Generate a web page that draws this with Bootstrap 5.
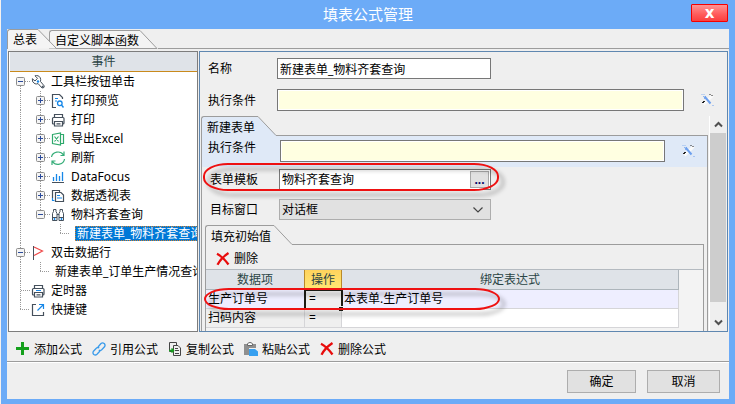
<!DOCTYPE html>
<html lang="zh-CN">
<head>
<meta charset="utf-8">
<meta name="viewport" content="width=device-width, initial-scale=1">
<title>填表公式管理</title>
<link href="https://cdn.jsdelivr.net/npm/bootstrap@5.3.0/dist/css/bootstrap.min.css" rel="stylesheet">
<style>
  body { font: 12px/19px "Noto Sans", "Noto Sans CJK SC", sans-serif; color: #000; background: #fff; }
  button, input, select { font: inherit; color: inherit; }
  svg { display: block; flex: none; }
  .dialog-frame { background: #6cabf7; border-left: 1px solid #f6f1ee; padding: 0 6px 5px; }
  .title-bar { height: 29px; flex: none; color: #fff; font-size: 15px; }
  .close-btn { top: 4px; right: 1px; width: 37px; height: 18px; border: 1px solid #f40000; border-radius: 1px;
    background: linear-gradient(#ff9292, #ff5a5a 60%, #fb3f3f); color: #fff; font: bold 15px/15px "DejaVu Sans", sans-serif; }
  .face { background: #efefef; }
  .edge-tab { background: none; border: 0; padding: 0; text-align: left; white-space: nowrap; }
  .edge-tab span { border-top: 1px solid #9c9c9c; border-left: 1px solid #9c9c9c; border-top-left-radius: 3px; background: #f4f4f4; }
  .tab-strip { height: 20px; }
  .tab-rule { flex: 1; border-bottom: 1px solid #9c9c9c; }
  .main-tab span { height: 20px; line-height: 20px; padding-left: 5px; }
  .second-tab { margin-left: -8px; }
  .second-tab span { height: 19px; border-bottom: 1px solid #9c9c9c; }
  .panes { grid-template-columns: 190px minmax(0, 1fr); gap: 1px; padding: 2px 1px 0; min-height: 0; }
  .tree-pane { border: 1px solid #7d7d7d; background: #fff; }
  .head-cell { background: #dfe3e8; color: #2b4545; }
  .tree-head { border-bottom: 1px solid #c98a1c; margin: 0 0 0 1px; line-height: 19px; }
  .tree-row { display: flex; align-items: center; height: 19px; padding-left: 1px; white-space: nowrap; }
  .tree-text { margin-left: 5px; }
  .leaf-text { padding: 0 2px; margin-left: 3px; line-height: 15px; }
  .leaf-text.picked { background: #0078d7; color: #fff; outline: 1px dotted #d08030; outline-offset: -1px; flex: 1; margin-left: 5px; }
  .twist { border: 0; background: none; padding: 0; }
  .form-pane { border: 1px solid #5f87b0; min-width: 0; }
  .top-fields { padding: 6px 11px 5px 8px; gap: 10px; }
  .field-row { display: flex; align-items: center; }
  .field-label { flex: none; width: 69px; }
  .box { border: 1px solid #777; background: #fff; padding: 0 2px; border-radius: 0; outline: 0; min-width: 0; }
  .box.formula { background: #ffffe1; height: 22px; box-shadow: inset 0 0 0 1px #fff; flex: 1; }
  .short-box { height: 21px; width: 214px; }
  .pick-box { width: 212px; height: 21px; border: 1px solid #777; background: #fff; padding: 1px; }
  .pick-box input { border: 0; padding: 0 1px; flex: 1; min-width: 0; outline: 0; }
  .pick-box button { width: 19px; border: 1px solid #a8a8a8; background: #e1e1e1; padding: 0; line-height: 12px; color: #006; font-weight: bold; }
  .pick-list { width: 212px; height: 21px; border: 1px solid #adadad; background: #e1e1e1; padding: 0 2px; appearance: none; }
  .pick-list-arrow { top: 7px; left: 270px; pointer-events: none; }
  .tool-gap { margin-left: 16px; }
  .scroll-zone { min-height: 0; }
  .page-area { padding-left: 1px; }
  .inner-page { border-right: 1px solid #9c9c9c; border-left: 1px solid #9c9c9c; }
  .blue-tab span { background: #dfe9f7; height: 20px; line-height: 21px; padding: 0 0 0 5px; width: 56px; }
  .blue-band { background: #dfe9f7; padding: 3px 10px 5px 6px; height: 31px; }
  .blue-band .field-label { width: 72px; line-height: 17px; align-self: flex-start; }
  .ringed { padding: 2px 0 9px 8px; }
  .target-row { padding-left: 8px; }
  .sub-tabs { padding: 5px 3px 0 3px; }
  .sub-tab span { height: 20px; line-height: 21px; width: 68px; padding-left: 5px; background: #efefef; }
  .sub-page { border: solid #9c9c9c; border-width: 0 1px; margin: 0 3px; background: #f3f3f3; }
  .sub-tools { height: 25px; padding: 3px 10px 0; background: #efefef; border-bottom: 1px solid #b4bac0; }
  .flat-btn { border: 0; background: none; padding: 0; display: flex; align-items: center; gap: 4px; white-space: nowrap; }
  .grid-table { table-layout: fixed; border-collapse: separate; border-spacing: 0; width: calc(100% - 24px); line-height: 18px; }
  .grid-table th, .grid-table td { padding: 0 2px; height: 19px; border: solid #d5d5d8; border-width: 0 1px 1px 0; font-weight: normal; white-space: nowrap; }
  .grid-table th { text-align: center; border-color: #adb5bb; height: 20px; }
  .grid-table th.hot { background: linear-gradient(#ffd35c, #ffe875); border-color: #b98a2a; box-shadow: -1px 0 #b98a2a; }
  .grid-table .current td { background: #eeeeff; }
  .grid-table td.fixed { background: #efefef; }
  .grid-table td.op { padding-left: 4px; }
  .grid-table td.cell-cursor { outline: 2px solid #1c1c14; outline-offset: -1px; position: relative; background: #efefef; }
  .cell-cursor::after { content: ""; position: absolute; right: -2px; bottom: -3px; width: 5px; height: 5px; background: #1c1c14; border: solid #efefef; border-width: 1px 0 0 1px; }
  .red-ring { position: absolute; width: 296px; border: 2px solid #ee1111; border-radius: 25px / 13px; filter: drop-shadow(5px 5px 2px rgba(0,0,0,.35)); pointer-events: none; }
  .ring-a { left: 1px; top: -4px; height: 28px; }
  .ring-b { left: -2px; top: 18px; height: 22px; border-radius: 25px / 11px; }
  .scroll-rail { width: 18px; flex: none; border-left: 1px solid #fff; margin-left: 1px; padding-right: 1px; }
  .scroll-rail button { height: 17px; border: 0; background: none; padding: 0; display: grid; place-items: center; }
  .scroll-thumb { background: #cdcdcd; height: 169px; }
  .actions { gap: 10px; padding: 4px 9px 0; border-bottom: 1px solid #fff; box-shadow: inset 0 -1px #9c9c9c; height: 31px; }
  .footer-row { height: 36px; gap: 11px; padding: 7px 9px 6px; }
  .sys-btn { border: 1px solid #adadad; background: #e1e1e1; padding: 0; width: 69px; }
  .sys-btn.wide { width: 73px; }
</style>
</head>
<body>
<svg width="0" height="0" class="position-absolute" aria-hidden="true">
  <defs>
    <symbol id="g-v" viewBox="0 0 20 19"><path d="M10.500 0V19" stroke="#999" stroke-dasharray="1 1"/></symbol>
    <symbol id="g-t" viewBox="0 0 20 19"><path d="M10.500 0V19M11 9.500H20" stroke="#999" stroke-dasharray="1 1"/></symbol>
    <symbol id="g-l" viewBox="0 0 20 19"><path d="M10.500 0V9M10 9.500H22" stroke="#999" stroke-dasharray="1 1"/></symbol>
    <symbol id="g-box" viewBox="0 0 20 19"><path d="M15 9.500H20" stroke="#999" stroke-dasharray="1 1"/><rect x="6.500" y="5.500" width="8" height="8" rx="1" fill="#f4f4f4" stroke="#8c8c8c"/><path d="M8 9.500H13" stroke="#2b4b9b"/></symbol>
    <symbol id="g-minus" viewBox="0 0 20 19"><path d="M10.500 0V19" stroke="#999" stroke-dasharray="1 1"/><use href="#g-box" width="20" height="19"/></symbol>
    <symbol id="g-first" viewBox="0 0 20 19"><path d="M10.500 14V19" stroke="#999" stroke-dasharray="1 1"/><use href="#g-box" width="20" height="19"/></symbol>
    <symbol id="g-last" viewBox="0 0 20 19"><path d="M10.500 0V5" stroke="#999" stroke-dasharray="1 1"/><use href="#g-box" width="20" height="19"/></symbol>
    <symbol id="g-plus" viewBox="0 0 20 19"><path d="M10.500 0V19" stroke="#999" stroke-dasharray="1 1"/><use href="#g-box" width="20" height="19"/><path d="M10.500 7V12" stroke="#2b4b9b"/></symbol>
    <symbol id="i-print" viewBox="0 0 16 16"><path d="M4.500 5V2.500H12.500V5M4 12H3.500Q2.500 12 2.500 11V6.500Q2.500 5.500 3.500 5.500H13Q14 5.500 14 6.500V11Q14 12 13 12H12.500M4.500 9.500H12.500V14H4.500ZM6.500 11.800H10.500" fill="none" stroke="#45505c" stroke-width="1.200"/></symbol>
    <symbol id="i-cross" viewBox="0 0 14 14"><path d="M1 1.800Q7 5 12.500 12.500M12.500 1Q5 6 1.500 12.700" fill="none" stroke="#e80c0c" stroke-width="2.300"/></symbol>
    <symbol id="i-tools" viewBox="0 0 16 16"><path d="M3.500 12.500L12.500 3.500" stroke="#fafafa" stroke-width="3"/><path d="M1.500 2.500H5M3 4.500H6M4 6.500H7" stroke="#8cb4ee" stroke-dasharray="1 1"/><path d="M4.500 4.500L10.500 11.500" stroke="#6c9fee" stroke-width="2"/><path d="M12.500 13.500H13.500" stroke="#6c9fee"/><path d="M2 10.500H4M3 9.500H5M9.500 2.500H10.500M11.500 3.500H12.500" stroke="#222"/></symbol>
  </defs>
</svg>

<main class="dialog-frame vh-100 d-flex flex-column overflow-hidden">
  <header class="title-bar position-relative d-flex align-items-center justify-content-center">
    <span>填表公式管理</span>
    <button type="button" class="close-btn position-absolute p-0" aria-label="关闭">x</button>
  </header>

  <div class="face flex-grow-1 d-flex flex-column overflow-hidden">
    <nav class="tab-strip d-flex flex-shrink-0 align-items-end">
      <button type="button" class="edge-tab main-tab d-flex position-relative z-1"><span>总表</span>
        <svg width="20" height="20"><path d="M0 0L19 19.500H0Z" fill="#f4f4f4"/><path d="M0 .5H1L19 19" fill="none" stroke="#9c9c9c"/></svg></button>
      <button type="button" class="edge-tab main-tab second-tab d-flex"><span>自定义脚本函数</span>
        <svg width="19" height="19"><path d="M0 0L18 18H0Z" fill="#f4f4f4"/><path d="M0 .5H1L18 18.500H0" fill="none" stroke="#9c9c9c"/></svg></button>
      <div class="tab-rule"></div>
    </nav>

    <div class="panes d-grid flex-grow-1">
      <section class="tree-pane overflow-hidden">
        <div class="head-cell tree-head text-center">事件</div>
        <ul class="list-unstyled m-0">
          <li class="tree-row"><button type="button" class="twist" aria-label="折叠"><svg width="20" height="19"><use href="#g-first"/></svg></button>
            <svg width="16" height="16" viewBox="0 0 16 16"><path d="M5 1.800L7.500 4.300 5 7 2.300 4.700Q1.800 8.500 5 9.800 7 10.300 8 9.500L12 14Q14.500 14.200 14.300 12L10.500 7.500Q11.300 3 8 1.800Q6.500 1.200 5 1.800Z" fill="#fff" stroke="#45505c"/><circle cx="8" cy="7.500" r="1.200" fill="#1687e8"/><path d="M12 12L13.500 13.500" stroke="#45505c" stroke-width="1.500"/></svg>
            <span class="tree-text">工具栏按钮单击</span></li>
          <li class="tree-row"><svg width="20" height="19"><use href="#g-v"/></svg><button type="button" class="twist" aria-label="展开"><svg width="20" height="19"><use href="#g-plus"/></svg></button>
            <svg width="16" height="16" viewBox="0 0 16 16"><path d="M6 14.500H2.500V1.500H9.500L12.500 4.500V6" fill="none" stroke="#45505c" stroke-width="1.200"/><path d="M5 5.500H8M5 8H7" stroke="#1687e8"/><circle cx="9.800" cy="10.300" r="2.300" fill="none" stroke="#1687e8" stroke-width="1.300"/><path d="M11.500 12L13.500 14.500" stroke="#1687e8" stroke-width="1.400"/></svg>
            <span class="tree-text">打印预览</span></li>
          <li class="tree-row"><svg width="20" height="19"><use href="#g-v"/></svg><button type="button" class="twist" aria-label="展开"><svg width="20" height="19"><use href="#g-plus"/></svg></button>
            <svg width="16" height="16"><use href="#i-print"/></svg><span class="tree-text">打印</span></li>
          <li class="tree-row"><svg width="20" height="19"><use href="#g-v"/></svg><button type="button" class="twist" aria-label="展开"><svg width="20" height="19"><use href="#g-plus"/></svg></button>
            <svg width="16" height="16" viewBox="0 0 16 16"><path d="M2.500 3.500L10.500 2V14L2.500 12.500ZM11 3.500H13.500V12.500H11M4.500 5.500L8.500 10.500M8.500 5.500L4.500 10.500" fill="none" stroke="#2fa96c" stroke-width="1.200"/></svg>
            <span class="tree-text">导出Excel</span></li>
          <li class="tree-row"><svg width="20" height="19"><use href="#g-v"/></svg><button type="button" class="twist" aria-label="展开"><svg width="20" height="19"><use href="#g-plus"/></svg></button>
            <svg width="16" height="16" viewBox="0 0 16 16"><path d="M1.500 7A6.500 6 0 0 1 13.500 5M14 1.500V5.500H10.500M14.500 9A6.500 6 0 0 1 2.500 11.500M2 15V11H5.500" fill="none" stroke="#35ad78" stroke-width="1.200"/></svg>
            <span class="tree-text">刷新</span></li>
          <li class="tree-row"><svg width="20" height="19"><use href="#g-v"/></svg><button type="button" class="twist" aria-label="展开"><svg width="20" height="19"><use href="#g-plus"/></svg></button>
            <svg width="16" height="16" viewBox="0 0 16 16"><path d="M2 13.500H14" stroke="#45505c"/><path d="M3.500 8V12M6.500 5V12M9.500 7V12M12.500 3V12" stroke="#1687e8" stroke-width="1.300"/></svg>
            <span class="tree-text">DataFocus</span></li>
          <li class="tree-row"><svg width="20" height="19"><use href="#g-v"/></svg><button type="button" class="twist" aria-label="展开"><svg width="20" height="19"><use href="#g-plus"/></svg></button>
            <svg width="16" height="16" viewBox="0 0 16 16"><path d="M2.500 10V2.500H9.500V4M5.500 4.500H11L13.500 7V13.500H5.500Z" fill="none" stroke="#45505c" stroke-width="1.200"/><path d="M7 7.500H10M7 10H12M2.500 10V12.500H4.500" fill="none" stroke="#1687e8" stroke-width="1.200"/></svg>
            <span class="tree-text">数据透视表</span></li>
          <li class="tree-row"><svg width="20" height="19"><use href="#g-v"/></svg><button type="button" class="twist" aria-label="折叠"><svg width="20" height="19"><use href="#g-last"/></svg></button>
            <svg width="16" height="16" viewBox="0 0 16 16"><path d="M3.500 4.500V2.500H6V4.500L7 6.500V13.500H2.500V6.500ZM10 4.500V2.500H12.500V4.500L13.500 6.500V13.500H9V6.500ZM7 7.500H9M2.500 10.500H7M9 10.500H13.500" fill="none" stroke="#45505c"/><path d="M4.500 11V13M11.500 11V13" stroke="#1687e8" stroke-width="1.500"/></svg>
            <span class="tree-text">物料齐套查询</span></li>
          <li class="tree-row"><svg width="20" height="19"><use href="#g-v"/></svg><svg width="20" height="19"></svg><svg width="20" height="19" overflow="visible"><use href="#g-l"/></svg>
            <span class="leaf-text picked">新建表单_物料齐套查询</span></li>
          <li class="tree-row"><button type="button" class="twist" aria-label="折叠"><svg width="20" height="19"><use href="#g-minus"/></svg></button>
            <svg width="16" height="16" viewBox="0 0 16 16"><path d="M3.500 1V15" stroke="#45505c"/><path d="M4 2L12.500 6 4 10.500" fill="none" stroke="#f04848" stroke-width="1.200"/></svg>
            <span class="tree-text">双击数据行</span></li>
          <li class="tree-row"><svg width="20" height="19"><use href="#g-v"/></svg><svg width="20" height="19"><use href="#g-l"/></svg>
            <span class="leaf-text">新建表单_订单生产情况查询</span></li>
          <li class="tree-row"><svg width="20" height="19"><use href="#g-t"/></svg><svg width="16" height="16"><use href="#i-print"/><path d="M6 7.500H11" stroke="#1687e8"/></svg><span class="tree-text">定时器</span></li>
          <li class="tree-row"><svg width="20" height="19"><use href="#g-l"/></svg>
            <svg width="16" height="16" viewBox="0 0 16 16"><path d="M6 2.500H2.500V13.500H13.500V10" fill="none" stroke="#45505c" stroke-width="1.200"/><path d="M9 2.500H13.500V7M13.500 2.500L7.500 8.500" fill="none" stroke="#1687e8" stroke-width="1.200"/></svg>
            <span class="tree-text">快捷键</span></li>
        </ul>
      </section>

      <section class="form-pane d-flex flex-column overflow-hidden">
        <div class="top-fields flex-shrink-0 d-flex flex-column">
          <div class="field-row"><label class="field-label" for="f-name">名称</label><input id="f-name" class="box short-box" value="新建表单_物料齐套查询"></div>
          <div class="field-row"><label class="field-label" for="f-cond">执行条件</label><input id="f-cond" class="box formula">
            <button type="button" class="flat-btn tool-gap" aria-label="编辑公式"><svg width="16" height="16"><use href="#i-tools"/></svg></button></div>
        </div>
        <div class="scroll-zone d-flex flex-grow-1 overflow-hidden">
          <div class="page-area flex-grow-1 overflow-hidden">
            <div class="d-flex">
              <button type="button" class="edge-tab blue-tab d-flex"><span>新建表单</span>
                <svg width="20" height="20"><path d="M0 0L20 20H0Z" fill="#dfe9f7"/><path d="M0 .5H1L19 19.500H20" fill="none" stroke="#9c9c9c"/></svg></button>
              <div class="tab-rule"></div>
            </div>
            <div class="inner-page">
              <div class="blue-band field-row"><label class="field-label" for="f-cond2">执行条件</label><input id="f-cond2" class="box formula">
                <button type="button" class="flat-btn tool-gap" aria-label="编辑公式"><svg width="16" height="16"><use href="#i-tools"/></svg></button></div>
              <div class="ringed field-row position-relative">
                <label class="field-label" for="f-tpl">表单模板</label>
                <div class="pick-box d-flex"><input id="f-tpl" value="物料齐套查询"><button type="button" aria-label="选择模板">...</button></div>
                <div class="red-ring ring-a"></div>
              </div>
              <div class="target-row field-row position-relative">
                <label class="field-label" for="f-win">目标窗口</label>
                <select id="f-win" class="pick-list"><option>对话框</option></select>
                <svg class="pick-list-arrow position-absolute" width="12" height="8"><path d="M1.500 1.500L6 6L10.500 1.500" fill="none" stroke="#444" stroke-width="1.200"/></svg>
              </div>
              <div class="sub-tabs d-flex">
                <button type="button" class="edge-tab sub-tab d-flex"><span>填充初始值</span>
                  <svg width="20" height="20"><path d="M0 .5H1L19 19.500H20" fill="none" stroke="#9c9c9c"/></svg></button>
                <div class="tab-rule"></div>
              </div>
              <div class="sub-page">
                <div class="sub-tools d-flex"><button type="button" class="flat-btn"><svg width="14" height="14"><use href="#i-cross"/></svg>删除</button></div>
                <div class="position-relative">
                  <table class="grid-table">
                    <colgroup><col style="width:99px"><col style="width:37px"><col></colgroup>
                    <thead><tr><th class="head-cell">数据项</th><th class="head-cell hot">操作</th><th class="head-cell">绑定表达式</th></tr></thead>
                    <tbody>
                      <tr class="current"><td>生产订单号</td><td class="op cell-cursor">=</td><td>本表单.生产订单号</td></tr>
                      <tr><td class="fixed">扫码内容</td><td class="fixed op">=</td><td class="bg-white"></td></tr>
                    </tbody>
                  </table>
                  <div class="red-ring ring-b"></div>
                </div>
                <div class="p-2"></div>
              </div>
            </div>
          </div>
          <div class="scroll-rail d-flex flex-column justify-content-between">
            <div class="d-flex flex-column">
              <button type="button" aria-label="向上滚动"><svg width="9" height="7"><path d="M1 5.500L4.500 2L8 5.500" fill="none" stroke="#505050" stroke-width="2"/></svg></button>
              <div class="scroll-thumb"></div>
            </div>
            <button type="button" aria-label="向下滚动"><svg width="9" height="7"><path d="M1 1.500L4.500 5L8 1.500" fill="none" stroke="#505050" stroke-width="2"/></svg></button>
          </div>
        </div>
      </section>
    </div>

    <div class="actions d-flex flex-shrink-0 align-items-center">
      <button type="button" class="flat-btn"><svg width="14" height="14"><path d="M6.500 0V13M0 6.500H13" stroke="#14a01c" stroke-width="3"/></svg>添加公式</button>
      <button type="button" class="flat-btn"><svg width="14" height="14" viewBox="0 0 14 14" fill="none" stroke="#3a9bea" stroke-width="1.300"><path d="M6 5L9 1.500Q10.500 .2 12.200 1.500Q13.700 3 12.500 4.800L9.500 8Q8 9 6.800 8"/><path d="M8 9L5 12.300Q3.500 13.600 1.800 12.500Q.3 11 1.500 9.200L4.500 6Q6 5 7.200 6"/></svg>引用公式</button>
      <button type="button" class="flat-btn"><svg width="14" height="14" viewBox="0 0 14 14"><path d="M5 9.500H1.500V.5H8.500V3" fill="none" stroke="#444"/><path d="M5.500 3.500H10L12.500 6V13.500H5.500ZM7 6.500H10M7 8.500H11M7 11.500H11" fill="none" stroke="#444"/><path d="M1 8.500H5.500M3.500 6.500L5.500 8.500L3.500 10.500" fill="none" stroke="#14a01c" stroke-width="1.500"/></svg>复制公式</button>
      <button type="button" class="flat-btn"><svg width="14" height="14" viewBox="0 0 14 14"><path d="M0 2H12V6H5V13H0Z" fill="#8f8f8f"/><path d="M3.500 3.500V2Q4 .5 6 .5T8.500 2V3.500Z" fill="#fff" stroke="#666"/><path d="M5 7H11L14 9.500V14H5Z" fill="#37a0f0"/></svg>粘贴公式</button>
      <button type="button" class="flat-btn"><svg width="14" height="14"><use href="#i-cross"/></svg>删除公式</button>
    </div>
    <footer class="footer-row d-flex flex-shrink-0 justify-content-end">
      <button type="button" class="sys-btn">确定</button>
      <button type="button" class="sys-btn wide">取消</button>
    </footer>
  </div>
</main>
<script src="https://cdn.jsdelivr.net/npm/bootstrap@5.3.0/dist/js/bootstrap.bundle.min.js"></script>
</body>
</html>
